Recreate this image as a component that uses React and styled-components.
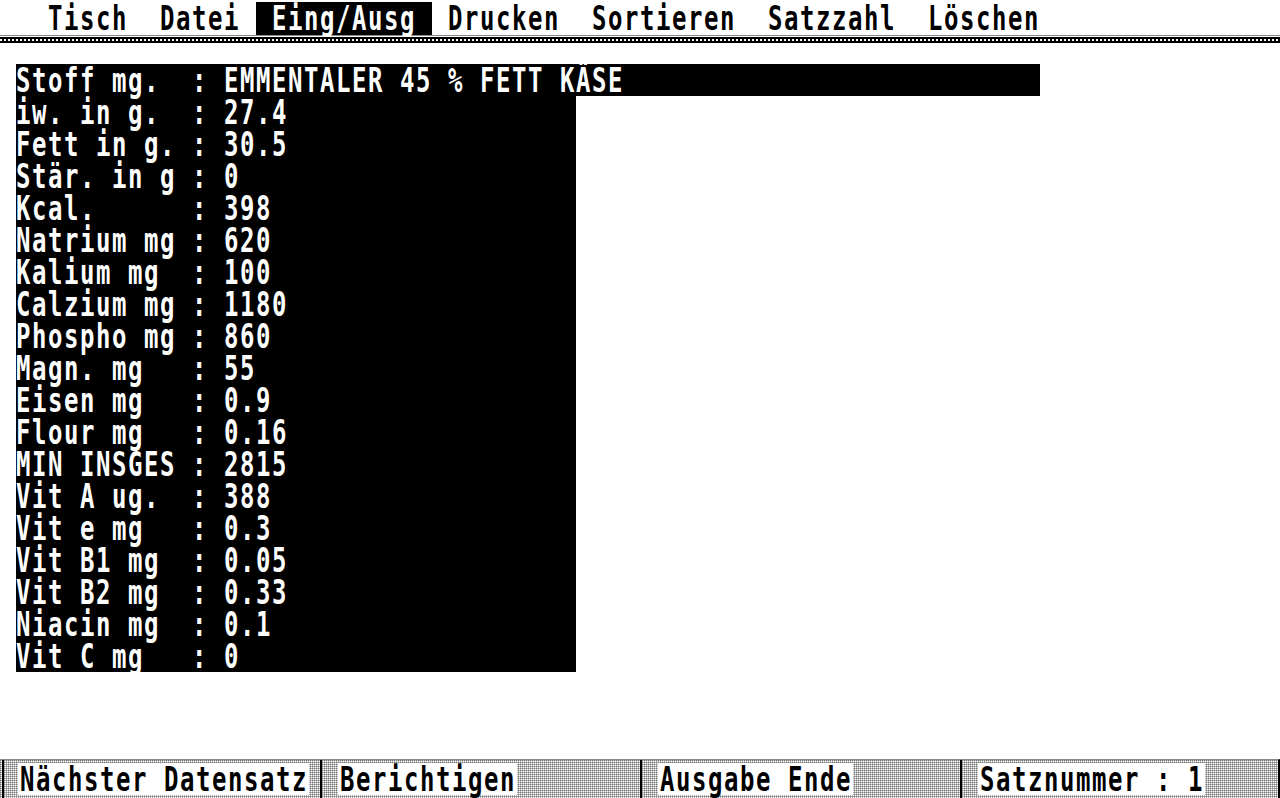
import React from 'react';
import styled, { createGlobalStyle, css } from 'styled-components';

const GlobalStyle = createGlobalStyle`
  html, body {
    margin: 0;
    padding: 0;
    background: #fff;
  }
`;

// 8x16 system font, doubled: 16px cells, 32px rows, narrow tall glyphs
const systemFont = css`
  font-family: "DejaVu Sans Mono", "Liberation Mono", monospace;
  font-weight: bold;
  font-size: 24px;
  letter-spacing: 1.55px;
  line-height: 32px;
  white-space: pre;
`;

const Page = styled.div`
  display: flex;
  flex-direction: column;
  height: 798px;
  overflow: hidden;
  background: #fff;
`;

const Glyphs = styled.span`
  display: inline-block;
  transform: scaleY(1.37);
  transform-origin: 0 14.3px;
`;

const MenuBar = styled.div`
  display: flex;
  box-sizing: border-box;
  height: 35px;
  padding: 2px 0 0 32px;
`;

const MenuItem = styled.div`
  ${systemFont};
  height: 33px;
  padding: 0 16px;
  color: ${(p) => (p.$active ? '#fff' : '#000')};
  background: ${(p) => (p.$active ? '#000' : 'transparent')};
`;

const Rule = styled.div`
  height: 1px;
  margin-bottom: 1px;
  background: #8a8a8a;
`;

const Band = styled.div`
  height: 6px;
  background-color: #000;
  background-image: repeating-linear-gradient(90deg, #fff 0 2px, transparent 2px 4px);
  background-size: 100% 2px;
  background-position: 0 2px;
  background-repeat: no-repeat;
`;

const Sheet = styled.div`
  display: flex;
  flex-direction: column;
  align-items: flex-start;
  padding: 21px 0 0 16px;
`;

const Row = styled.div`
  ${systemFont};
  height: 32px;
  width: ${(p) => (p.$wide ? '1024px' : '560px')};
  background: #000;
  color: #fff;
`;

const Footer = styled.div`
  margin-top: auto;
  box-sizing: border-box;
  height: 39px;
  display: grid;
  grid-template-columns: repeat(4, 320px);
  border-top: 1px solid #888;
  border-right: 2px solid #000;
  background-color: #fff;
  background-image:
    linear-gradient(90deg, rgba(0, 0, 0, 0.3) 1px, transparent 1px),
    linear-gradient(rgba(0, 0, 0, 0.3) 1px, transparent 1px);
  background-size: 2px 2px;
`;

const Slot = styled.div`
  box-sizing: border-box;
  border-left: 2px solid #000;
  padding: 3px 0 0 ${(p) => (p.$edge ? '14px' : '16px')};
  margin-left: ${(p) => (p.$edge ? '2px' : '0')};
`;

const Label = styled.span`
  ${systemFont};
  display: inline-block;
  height: 32px;
  padding: 0 1px 0 2px;
  background: #fff;
  color: #000;
`;

const menu = ['Tisch', 'Datei', 'Eing/Ausg', 'Drucken', 'Sortieren', 'Satzzahl', 'Löschen'];

const rows = [
  'Stoff mg.  : EMMENTALER 45 % FETT KÄSE',
  'iw. in g.  : 27.4',
  'Fett in g. : 30.5',
  'Stär. in g : 0',
  'Kcal.      : 398',
  'Natrium mg : 620',
  'Kalium mg  : 100',
  'Calzium mg : 1180',
  'Phospho mg : 860',
  'Magn. mg   : 55',
  'Eisen mg   : 0.9',
  'Flour mg   : 0.16',
  'MIN INSGES : 2815',
  'Vit A ug.  : 388',
  'Vit e mg   : 0.3',
  'Vit B1 mg  : 0.05',
  'Vit B2 mg  : 0.33',
  'Niacin mg  : 0.1',
  'Vit C mg   : 0',
];

const keys = ['Nächster Datensatz', 'Berichtigen', 'Ausgabe Ende', 'Satznummer : 1'];

export default function App() {
  return (
    <Page>
      <GlobalStyle />
      <MenuBar>
        {menu.map((m) => (
          <MenuItem key={m} $active={m === 'Eing/Ausg'}>
            <Glyphs>{m}</Glyphs>
          </MenuItem>
        ))}
      </MenuBar>
      <Rule />
      <Band />
      <Sheet>
        {rows.map((r, i) => (
          <Row key={r} $wide={i === 0}>
            <Glyphs>{r}</Glyphs>
          </Row>
        ))}
      </Sheet>
      <Footer>
        {keys.map((k, i) => (
          <Slot key={k} $edge={i === 0}>
            <Label>
              <Glyphs>{k}</Glyphs>
            </Label>
          </Slot>
        ))}
      </Footer>
    </Page>
  );
}
